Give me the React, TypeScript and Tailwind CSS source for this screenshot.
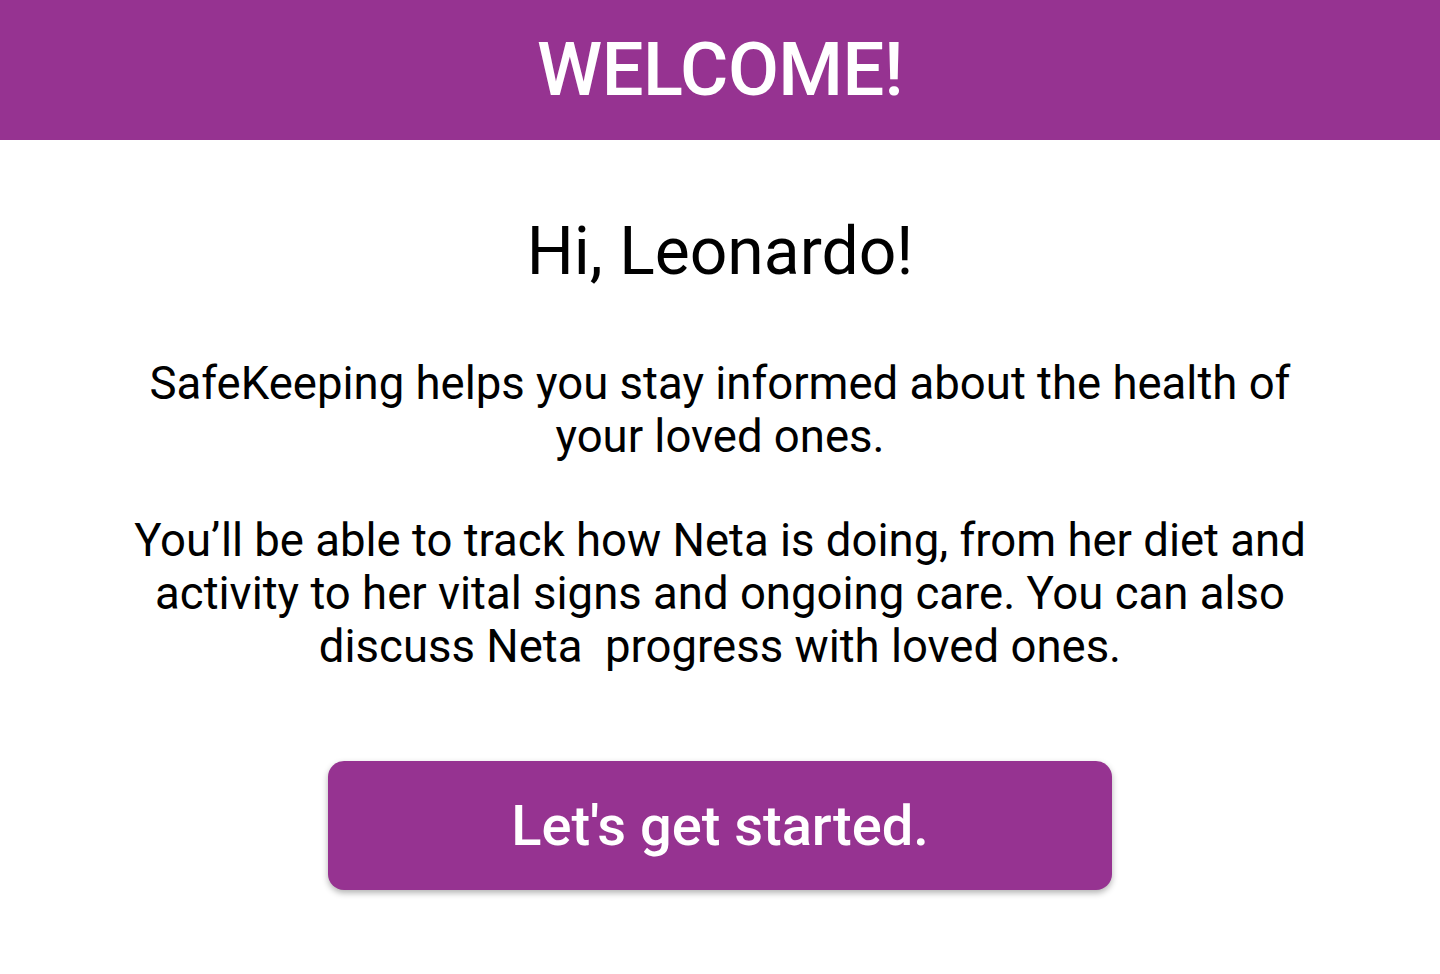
export default function App() {
  return (
    <div className="min-h-screen bg-white text-black" style={{ fontFamily: 'Roboto, "Liberation Sans", sans-serif' }}>
      <header className="h-[140px] bg-[#963391] flex items-center justify-center">
        <h1 className="text-[74px] font-medium text-white leading-none tracking-[-0.5px]">WELCOME!</h1>
      </header>

      <main className="flex flex-col items-center px-[120px]">
        <h2 className="mt-[72px] text-[66px] leading-[80px] font-normal">Hi, Leonardo!</h2>

        <p className="mt-[65px] text-[45.5px] leading-[53px] text-center">
          SafeKeeping helps you stay informed about the health of your loved ones.
        </p>
        <p className="mt-[51px] text-[45.5px] leading-[53px] text-center">
          You’ll be able to track how Neta is doing, from her diet and activity to her vital signs and ongoing care. You can also discuss Neta{'\u00a0'} progress with loved ones.
        </p>

        <button className="mt-[88px] w-[784px] h-[129px] rounded-[16px] bg-[#963391] text-white text-[56px] font-medium shadow-[0_3px_6px_rgba(0,0,0,0.3)]">
          Let's get started.
        </button>
      </main>
    </div>
  );
}
